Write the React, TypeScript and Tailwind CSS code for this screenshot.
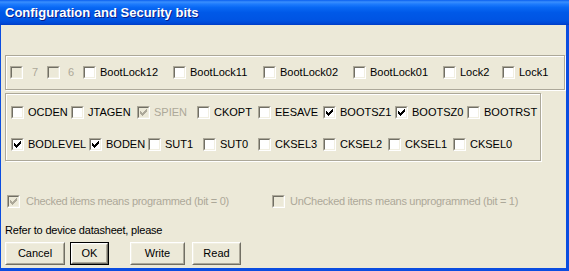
import React from "react"

type Item = { label: string; w: number; checked?: boolean; disabled?: boolean; gap?: number }

const lockBits: Item[] = [
  { label: "7", w: 37, disabled: true, gap: 9 },
  { label: "6", w: 36, disabled: true, gap: 8 },
  { label: "BootLock12", w: 90 },
  { label: "BootLock11", w: 90 },
  { label: "BootLock02", w: 90 },
  { label: "BootLock01", w: 90 },
  { label: "Lock2", w: 59 },
  { label: "Lock1", w: 50 },
]

const fuseRow1: Item[] = [
  { label: "OCDEN", w: 60 },
  { label: "JTAGEN", w: 66 },
  { label: "SPIEN", w: 60, checked: true, disabled: true },
  { label: "CKOPT", w: 61 },
  { label: "EESAVE", w: 65 },
  { label: "BOOTSZ1", w: 72, checked: true },
  { label: "BOOTSZ0", w: 72, checked: true },
  { label: "BOOTRST", w: 60 },
]

const fuseRow2: Item[] = [
  { label: "BODLEVEL", w: 78, checked: true },
  { label: "BODEN", w: 59, checked: true },
  { label: "SUT1", w: 55 },
  { label: "SUT0", w: 55 },
  { label: "CKSEL3", w: 65 },
  { label: "CKSEL2", w: 65 },
  { label: "CKSEL1", w: 65 },
  { label: "CKSEL0", w: 60 },
]

function CheckMark({ color }: { color: string }) {
  return (
    <svg width="7" height="7" viewBox="0 0 7 7" shapeRendering="crispEdges" className="block">
      <path
        fill={color}
        d="M6 0h1v1h-1z M5 1h2v1h-2z M0 2h1v1h-1z M4 2h3v1h-3z M0 3h2v1h-2z M3 3h3v1h-3z M0 4h5v1h-5z M1 5h3v1h-3z M2 6h1v1h-1z"
      />
    </svg>
  )
}

function CheckBox({ checked = false, disabled = false }: { checked?: boolean; disabled?: boolean }) {
  return (
    <div className="w-[13px] h-[13px] shrink-0 border border-t-[#aca899] border-l-[#aca899] border-b-white border-r-white">
      <div
        className={`w-full h-full border border-t-[#716f64] border-l-[#716f64] border-b-[#f1efe2] border-r-[#f1efe2] flex items-center justify-center ${
          disabled ? "bg-[#ece9d8]" : "bg-white"
        }`}
      >
        {checked && <CheckMark color={disabled ? "#aca899" : "#000"} />}
      </div>
    </div>
  )
}

function Option({ item }: { item: Item }) {
  return (
    <div className="flex items-center shrink-0" style={{ width: item.w }}>
      <CheckBox checked={item.checked} disabled={item.disabled} />
      <span
        className={`leading-[13px] whitespace-nowrap ${item.disabled ? "text-[#aca899]" : "text-black"}`}
        style={{ marginLeft: item.gap ?? 4 }}
      >
        {item.label}
      </span>
    </div>
  )
}

function Button({ label, isDefault = false, w }: { label: string; isDefault?: boolean; w: string }) {
  const inner = (
    <div className="h-full border border-t-white border-l-white border-b-[#716f64] border-r-[#716f64]">
      <div className="h-full border border-t-[#f1efe2] border-l-[#f1efe2] border-b-[#aca899] border-r-[#aca899] flex items-center justify-center">
        {label}
      </div>
    </div>
  )
  return (
    <div className={`${w} h-[23px] bg-[#ece9d8] ${isDefault ? "border border-black" : ""}`}>{inner}</div>
  )
}

export default function App() {
  return (
    <div className="w-[569px] h-[271px] flex flex-col overflow-hidden text-[11px] font-['Liberation_Sans',Arial,sans-serif]">
      <div className="h-[25px] shrink-0 flex items-center pl-[5px] bg-[linear-gradient(to_bottom,#0a5fef_0%,#3a8ffd_8%,#1f7cfd_16%,#0868f4_30%,#0059e8_50%,#0054e3_80%,#004ad8_92%,#003cc6_100%)]">
        <span className="text-white font-bold text-[13px] leading-none [text-shadow:1px_1px_0_#0a1f8a]">
          Configuration and Security bits
        </span>
      </div>

      <div className="flex-1 flex flex-col bg-[#ece9d8] border-l border-r-[3px] border-b-[3px] border-[#0b4de0] pl-[4px]">
        <div className="mt-[30px] w-[560px] h-[35px] border border-[#aca899] shadow-[inset_1px_1px_0_#fff,1px_1px_0_#fff] flex items-center pl-[4px]">
          {lockBits.map((it) => (
            <Option key={it.label} item={it} />
          ))}
        </div>

        <div className="mt-[3px] w-[536px] h-[68px] border border-[#aca899] shadow-[inset_1px_1px_0_#fff,1px_1px_0_#fff] flex flex-col pl-[5px] pt-[12px] gap-[19px]">
          <div className="flex items-center h-[13px]">
            {fuseRow1.map((it) => (
              <Option key={it.label} item={it} />
            ))}
          </div>
          <div className="flex items-center h-[13px]">
            {fuseRow2.map((it) => (
              <Option key={it.label} item={it} />
            ))}
          </div>
        </div>

        <div className="mt-[34px] h-[13px] flex items-center text-[#aca899] tracking-[-0.3px]">
          <div className="w-[265px] ml-[2px] flex items-center">
            <CheckBox checked disabled />
            <span className="ml-[6px] leading-[13px] whitespace-nowrap">Checked items means programmed (bit = 0)</span>
          </div>
          <div className="flex items-center">
            <CheckBox disabled />
            <span className="ml-[5px] leading-[13px] whitespace-nowrap">UnChecked items means unprogrammed (bit = 1)</span>
          </div>
        </div>

        <div className="mt-[16px] h-[13px] leading-[13px] text-black tracking-[-0.2px]">Refer to device datasheet, please</div>

        <div className="mt-[5px] flex items-center text-black">
          <Button label="Cancel" w="w-[60px]" />
          <div className="ml-[5px]">
            <Button label="OK" w="w-[39px]" isDefault />
          </div>
          <div className="ml-[21px]">
            <Button label="Write" w="w-[55px]" />
          </div>
          <div className="ml-[7px]">
            <Button label="Read" w="w-[49px]" />
          </div>
        </div>
      </div>
    </div>
  )
}
